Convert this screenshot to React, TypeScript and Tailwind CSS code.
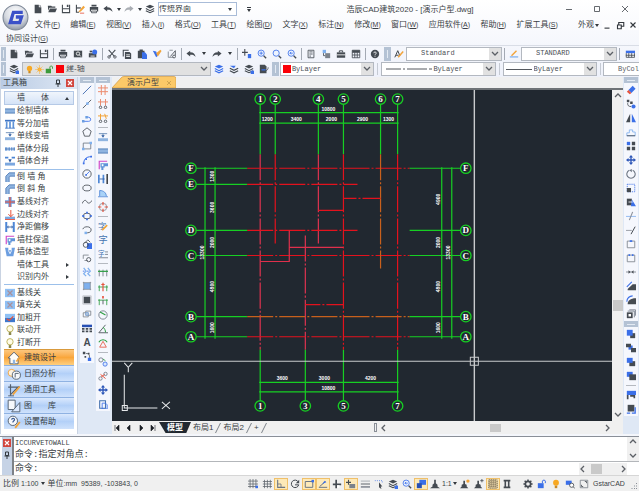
import { Fragment, type ReactNode } from "react";

// ------------------------------------------------------------
// | ICONS (12x12 grid)
// ------------------------------------------------------------
const K = "#454b52";
const B = "#3b6fe8";
const L = "#7fb0ee";
const R = "#e5533d";
const O = "#f2a43a";
const G = "#2f9e44";

const line = (d: string, color = K, w = 1) => <path d={d} stroke={color} strokeWidth={w} fill="none" />;
const fill = (d: string, color = K) => <path d={d} fill={color} />;

const layers = (
  <>
    {fill("M6 1l5 2-5 2.5L1 3z")}
    {line("M1 5.5l5 2.5 5-2.5M1 8l5 2.5L11 8", K, 1.3)}
  </>
);
const magnifier = (
  <>
    <circle cx="5" cy="5" r="3.7" stroke={B} fill="#eef4ff" />
    {line("M8 8l3 3", K, 1.6)}
  </>
);
const wallBar = fill("M0 3.5h12v5H0z", "#8fb4e0");

const icons: Record<string, ReactNode> = {
  file: fill("M2 1h5v3h3v7H2zM8 1l2 2H8z"),
  open: fill("M1 2h4l1 1h4v1.5H3L1.5 8zM3.5 5.5H12L10 10H1.5z"),
  save: (
    <>
      {line("M1.7 1v9.3h8.6V1", K, 1.3)}
      {fill("M2 5h8v1.3H2zM7 1h2v2.500H7z")}
    </>
  ),
  saveAs: (
    <>
      {line("M5 10H1.7V1", K, 1.3)}
      {fill("M2 4h5v1.5H2z")}
      {fill("M5 8l5-6 2 2-5 5-3 1z", O)}
      {line("M6 11h5", R)}
    </>
  ),
  print: (
    <>
      {fill("M3 1h6v2H3zM1 3.7h10V9H9.5V7h-7v2H1z")}
      {line("M3 8.5h6v2H3z")}
    </>
  ),
  preview: (
    <>
      {fill("M1 2h10v8H1z")}
      <circle cx="6" cy="5.5" r="2" stroke="#fff" fill={K} />
      {line("M7.5 7l2 2", "#fff")}
    </>
  ),
  publish: (
    <>
      {fill("M1 5h9v5H1z")}
      {line("M3 8.5h5", "#fff")}
      <circle cx="8" cy="3.5" r="3" fill={B} />
      {fill("M2 2h3v2H2z")}
    </>
  ),
  undo: fill("M5 2v2c4 0 6 2 6.5 5.5C10 7.500 8 6.800 5 7v2L0.500 5.500z"),
  redo: fill("M7 2v2C3 4 1 6 .5 9.500 2 7.500 4 6.800 7 7v2l4.500-3.500z"),
  redoGray: fill("M7 2v2C3 4 1 6 .5 9.500 2 7.500 4 6.800 7 7v2l4.500-3.500z", "#a9adb3"),
  layers,
  layersBlue: (
    <>
      {layers}
      {fill("M8 8h4v4H8z", B)}
    </>
  ),
  layersAll: (
    <>
      {fill("M6 1l5 2-5 2.5L1 3z", B)}
      {line("M1 5.500l5 2.500 5-2.500M1 8l5 2.500L11 8", B, 1.4)}
    </>
  ),
  layersUndo: (
    <>
      {fill("M1 2h7L6 5z", B)}
      {line("M1 5l5 2.500L11 5M1 8l5 2.500L11 8", K, 1.4)}
    </>
  ),
  layerFile: (
    <>
      {fill("M1 1h6l2 2v8H1z")}
      {line("M3 7h5", B, 1.5)}
      {line("M8 8c2 0 3-2 3-4")}
    </>
  ),
  cut: (
    <>
      {line("M2 1l7 8M10 1L3 9", K, 1.3)}
      <circle cx="2.500" cy="9.500" r="1.500" stroke={K} />
      <circle cx="9.500" cy="9.500" r="1.500" stroke={K} />
    </>
  ),
  copy: (
    <>
      {line("M1.500 9V1.500H8", K, 1.3)}
      {fill("M3.500 3.500H9l2 2V12H3.500z")}
      {line("M5 7h4.500M5 9h4.500", "#fff")}
    </>
  ),
  paste: (
    <>
      {fill("M1 2h8v9H1zM3 0.500h4v2H3z")}
      {fill("M6 4h3.500L12 6.500V12H6z", B)}
    </>
  ),
  brush: (
    <>
      {fill("M1 2l4 1 2 5-2 2z", B)}
      {fill("M5 5l5-4 1.500 1.500L7 9z", O)}
    </>
  ),
  block: (
    <>
      {line("M1.500 3v7h6M3 1.500h4", "#7c828a")}
      {line("M4 9l6-7M10 2v6", K)}
      <circle cx="8.500" cy="9" r="1.700" stroke={K} />
    </>
  ),
  pan: (
    <>
      {fill("M4 0v8H2.700V0zM0 3.300h7v1.400H0z")}
      {fill("M7 6h4v5H7z", B)}
    </>
  ),
  zoomIn: (
    <>
      {magnifier}
      {line("M3 5h4M5 3v4", B)}
    </>
  ),
  zoomWin: magnifier,
  zoomPrev: (
    <>
      {magnifier}
      {line("M7 5H3.500l1.500-1.500M3.500 5L5 6.500", B)}
    </>
  ),
  props: (
    <>
      {line("M2.500 1.500h7v9h-7z")}
      {line("M4 3.500h4M4 6h4M4 8.500h2")}
    </>
  ),
  clips: (
    <>
      {fill("M2 1h4v4H2z", L)}
      {fill("M5 5h6v6H5z", "#7c828a")}
      {line("M3 5v3h2")}
    </>
  ),
  toolCase: (
    <>
      {fill("M1 4h10v6.500H1z")}
      {line("M4 4V2.200h4V4", K, 1.2)}
      {line("M1 7h10", "#fff")}
    </>
  ),
  calc: (
    <>
      {line("M1.500 1.500h9v9h-9zM1.500 4h9M1.500 7.200h9M4.500 4v6.500M7.500 4v6.500")}
      {fill("M1.500 1.500h9V4h-9z")}
    </>
  ),
  help: (
    <>
      <circle cx="6" cy="6" r="5" fill={K} />
      {line("M4.500 5c0-2 3-2 3 0 0 1-1.500 1-1.500 2M6 8v1.300", "#fff")}
    </>
  ),
  textStyle: (
    <>
      {line("M1 10L4.500 2 7 8M2.500 7.500h3", K, 1.2)}
      {line("M5 10l6-7", O, 1.8)}
    </>
  ),
  dimStyle: (
    <>
      {line("M1 9.500h10", L, 1.5)}
      {line("M3 8l6-6", O, 1.8)}
    </>
  ),
  tableStyle: (
    <>
      {fill("M1 2h11v3H1z", B)}
      {line("M1.500 5v5h10V5M1 7.500h11M4.500 5v5M8 5v5")}
    </>
  ),
  bulb: (
    <>
      <circle cx="6" cy="4.500" r="3.500" fill="#f7a823" />
      {fill("M4.500 8h3v3h-3z", "#c98a25")}
    </>
  ),
  bulbOutline: (
    <>
      <circle cx="6" cy="4.500" r="3.800" fill="#fffbe6" stroke="#b3a94a" />
      {fill("M4.500 8.500h3V12h-3z", "#8b8748")}
    </>
  ),
  sun: (
    <>
      <circle cx="6" cy="6" r="2.700" fill="#f7a823" />
      {line("M6 0v12M0 6h12M2 2l8 8M10 2l-8 8", "#f7b94e", 0.8)}
    </>
  ),
  unlock: (
    <>
      {fill("M1 5h7v6H1z", "#3c9a3c")}
      {line("M6.500 5V2.500c0-1.500 3.500-1.500 3.500 0V5", "#3c9a3c", 1.2)}
    </>
  ),
  unlockBlue: (
    <>
      {fill("M1 5h7v6H1z", B)}
      {line("M6.500 5V2.500c0-1.500 3.500-1.500 3.500 0V5", B, 1.2)}
    </>
  ),

  // toolbox rows
  wall: (
    <>
      {wallBar}
      {line("M0 3.500h12M0 8.500h12", "#4674b0")}
    </>
  ),
  wallSplit: (
    <>
      {line("M0 2h12", "#3f74c4", 2)}
      {line("M2 3v8M6 3v8M10 3v8", "#5f93d8", 2)}
      {line("M0 11h12", "#3f74c4")}
    </>
  ),
  wallSingle: (
    <>
      {line("M1 2h10M6 2v3", "#5a7fae")}
      {fill("M4 4h4L6 7z", "#2c5aa0")}
      {fill("M0 7.500h12V11H0z", "#8fb4e0")}
    </>
  ),
  wallParts: (
    <>
      {fill("M0 4h3v4H0zM4 4h2v4H4zM7 4h2v4H7zM10 4h2v4h-2z", "#7ba7df")}
      {line("M0 6h12", "#4674b0")}
    </>
  ),
  wallMerge: (
    <>
      {line("M0 2h4M8 2h4", "#4d86d6", 2)}
      {fill("M4 4h4L6 8z", "#2c5aa0")}
      {fill("M0 8h12v3.500H0z", "#7ba7df")}
    </>
  ),
  corner: (
    <>
      {fill("M1 12V5l4-4h7v4H6L5 6v6z", "#8fb4e0")}
      {line("M1 12V5l4-4h7M5 12V6l1-1h6", "#4d78b4")}
    </>
  ),
  cross: (
    <>
      {line("M6 0v12M0 6h12", "#6f9fe0", 4)}
      {line("M6 0v12M0 6h12", R, 1.4)}
    </>
  ),
  sideAlign: (
    <>
      {fill("M0 8h12v3H0z", "#7ba7df")}
      {line("M7 0v8M4 5l3 3 3-3M0 11.500h12", R, 1.2)}
    </>
  ),
  offset: (
    <>
      {line("M1.500 0v12M10.500 0v12", "#4d86d6", 2.4)}
      {line("M3 6h6", "#2c5aa0")}
      {fill("M4 4v4L2.500 6zM8 4v4l1.500-2z", "#2c5aa0")}
    </>
  ),
  column: (
    <>
      {line("M1.500 11V1.500H11", "#d048c8", 1.4)}
      {fill("M3 4h9v3.500H8V9H6.500v3H4V9H3z", "#5f93d8")}
      {fill("M4.500 5h2v2.500h-2z", "#fff")}
    </>
  ),
  shape: (
    <>
      {fill("M0 1h4v3h4V1h4l-2 10H2z", "#6c9ee0")}
      {line("M4 4l2 4 2-4", "#fff")}
    </>
  ),
  offX: (
    <>
      {fill("M0 1h12v10H0z", "#8fc0f4")}
      {line("M3 3l6 6M9 3L3 9", "#a9909c", 1.5)}
    </>
  ),
  onCheck: (
    <>
      {fill("M0 1h12v5H0z", "#8fc0f4")}
      {fill("M0 6h12v5H0z", "#3f78cc")}
      {line("M2 7l3 2 5-5", R, 1.5)}
    </>
  ),

  // draw column
  line: line("M1 11L11 1", "#5379b8", 1.2),
  ray: (
    <>
      {line("M1 11L11 1")}
      {fill("M5 4h3v3H5z", L)}
    </>
  ),
  pline: (
    <>
      {line("M1 10h7c4 0 3-6-2-5", B)}
      {fill("M0 8.500h3v3H0zM4 3.500h3v3H4z", "#6c9ee0")}
    </>
  ),
  polygon: line("M6 1l5 4-2 6H3L1 5z"),
  rect: (
    <>
      {line("M1.500 2.500h9v7h-9z", "#6d7683")}
      {fill("M0 8h3v3H0zM9 1h3v3H9z", L)}
    </>
  ),
  arc: (
    <>
      {line("M2 11C2 5 5 2 11 2", B, 1.2)}
      {fill("M1 9h2v2H1zM4 4h2v2H4zM10 1h2v2h-2z", B)}
    </>
  ),
  circle: (
    <>
      <circle cx="6" cy="6" r="5" stroke={K} fill="none" />
      {line("M4.500 7.500L9 3", B)}
      {fill("M4 6h2v2H4z", B)}
    </>
  ),
  ellipse: <ellipse cx="6" cy="6" rx="5" ry="3.500" stroke={K} fill="none" />,
  spline: line("M0 8c3-6 5-4 6-2s4 2 6-2"),
  ellipseDots: (
    <>
      <ellipse cx="6" cy="6" rx="4.500" ry="3.500" stroke={K} fill="none" />
      {fill("M0 5h3v2H0zM9 5h3v2H9zM5 1h2v2H5zM5 9h2v2H5z", B)}
    </>
  ),
  ellipseArc: (
    <>
      {line("M1 5c1-4 10-4 10 1 0 3-4 4-7 3")}
      {fill("M3 8h3v3H3z", L)}
    </>
  ),
  insertBlock: (
    <>
      {fill("M6 5h6v7H6z", B)}
      <circle cx="4.500" cy="7" r="3" stroke={K} fill="none" />
      {line("M3 5l4-4 3 3")}
    </>
  ),
  makeBlock: (
    <>
      {line("M1.500 7V2.500H8M3 9h4", "#7c828a")}
      <circle cx="8" cy="8" r="2.500" stroke={K} fill="none" />
    </>
  ),
  divide: (
    <>
      {line("M2 1l3 4-3 3 3 3M7 1l3 4-3 3 3 3", L, 1.5)}
      {line("M1 5h2M6 5h2", B)}
    </>
  ),
  hatch: (
    <>
      {fill("M2 2h8v8H2z", L)}
      {line("M1 2h10M1 10h10M2 1v10M10 1v10", "#7c828a", 0.8)}
    </>
  ),
  gradient: (
    <>
      {fill("M2 2h8v8H2z", K)}
      {line("M1 1h10v10H1z", "#b0b4ba", 0.8)}
    </>
  ),
  region: (
    <>
      {line("M1.500 4.500h6v5h-6zM4.500 2.500h6v5h-6z", "#7c828a")}
      {line("M4.500 4.500h3v3h-3z", L)}
    </>
  ),
  table: (
    <>
      {fill("M0 2h12v3H0z", "#274fb4")}
      {fill("M0 6h3v2H0zM4.500 6h3v2h-3zM9 6h3v2H9zM0 9h3v2H0zM4.500 9h3v2h-3zM9 9h3v2H9z")}
    </>
  ),
  letterA: (
    <text x="6" y="10.500" fontSize="12" fontWeight="bold" textAnchor="middle" fill={K}>
      A
    </text>
  ),
  points: (
    <>
      {fill("M1 1h3v3H1zM7 2h2v2H7zM3 6h2v2H3z")}
      {fill("M7 8h4v4H7z", B)}
      {line("M5 3c4 0 4 2 4 5")}
    </>
  ),

  // wall column
  grid: line("M4 0v12M8.500 0v12M0 3.500h12M0 8h12", "#ec8d70", 1.2),
  axisA: (
    <>
      {line("M3 0v8M9 0v8M0 3.500h12", "#ec8d70", 1.2)}
      <circle cx="3" cy="10" r="1.500" stroke={K} fill="none" />
      <circle cx="9" cy="10" r="1.500" stroke={K} fill="none" />
    </>
  ),
  axisB: (
    <>
      {line("M3 1v7M8 1l2 6M0 3.500h12", O, 1.2)}
      <circle cx="3" cy="10" r="1.500" stroke={K} fill="none" />
      <circle cx="9" cy="10" r="1.500" stroke={K} fill="none" />
    </>
  ),
  opening: (
    <>
      {line("M1 1v10M6.500 1v10", "#4d86d6", 2)}
      {line("M2 6h6", "#2c5aa0")}
      {line("M11 0v12", "#1c2026", 1.6)}
    </>
  ),
  door: (
    <>
      {fill("M2 10V3c5 0 8 3 8 7z", "#a9d2f7")}
      {line("M2 10V3c5 0 8 3 8 7M0 10.500h12", "#4d86d6")}
    </>
  ),
  roundCross: (
    <>
      <circle cx="6" cy="6" r="4.500" stroke="#8a8f98" fill="none" />
      {line("M6 0v4M6 8v4M0 6h4M8 6h4", R, 1.4)}
    </>
  ),
  textEdit: (
    <>
      <text x="5" y="9" fontSize="10" textAnchor="middle" fill="#4674b0">
        字
      </text>
      {line("M5 11l6-6", O, 2)}
    </>
  ),
  textOne: (
    <text x="6" y="10" fontSize="11" textAnchor="middle" fill="#4674b0">
      字
    </text>
  ),
  textMulti: (
    <>
      <text x="4" y="8" fontSize="8" textAnchor="middle" fill="#4674b0">
        字
      </text>
      {line("M8.500 3.500H12M8.500 6.500H12M1 10.500h11", "#6d7683")}
    </>
  ),
  dimGreen: (
    <>
      {line("M1.500 2v8M6 2v8M10.500 2v8", "#6d7683")}
      {line("M0 4h12", G, 1.5)}
    </>
  ),
  dimRed: (
    <>
      {line("M1.500 4v7M10.500 4v7M0 6h12", G)}
      {line("M6 1v10M4 3h4", R, 1.4)}
    </>
  ),
  dimTri: (
    <>
      {line("M1.500 4v7M10.500 4v7M0 5h12", G)}
      {fill("M5 0h2v3H5z", R)}
      {line("M6 5v5")}
    </>
  ),
  radius: (
    <>
      <circle cx="6" cy="6" r="5" stroke="#6d7683" fill="none" />
      {line("M2.500 2.500L9 6", G, 1.4)}
    </>
  ),
  angle: (
    <>
      {line("M1 10.500h11M1 10.500L9 1")}
      {line("M6 4c2 1 3 4 3 6", G, 1.2)}
    </>
  ),
  coord: (
    <>
      {line("M1 5c2-4 8-4 10 0", G, 1.3)}
      {line("M2 11l4-7 4 7z", R)}
    </>
  ),
  copyRound: (
    <>
      <circle cx="3.500" cy="3.500" r="2.500" stroke="#6d7683" fill="none" />
      <circle cx="8.500" cy="8.500" r="2.500" stroke={B} fill="#dbe8fd" />
      {line("M6 2.500l3 2", G)}
    </>
  ),
  rotateLink: (
    <>
      <circle cx="3" cy="9" r="2" stroke="#6d7683" fill="none" />
      <circle cx="9" cy="3.500" r="2" stroke="#6d7683" fill="none" />
      {line("M3 4l6 5M4 7l4-3", R, 1.2)}
    </>
  ),
  move: (
    <>
      {line("M6 2v8M2 6h8", "#2c56b8", 1.6)}
      {fill("M6 0l2.500 3h-5zM6 12l2.500-3h-5zM0 6l3-2.500v5zM12 6L9 3.500v5z", "#2c56b8")}
    </>
  ),
  pasteDoc: (
    <>
      {line("M2 2h7v9H2z", "#4674b0", 1.3)}
      {line("M5 5h4l2 2v5H5z", B)}
    </>
  ),

  // modify column
  erase: (
    <>
      {fill("M3 6l5-5 3.500 3.500-5 5z", B)}
      {fill("M3 6l3.500 3.500L4.500 11 1 8z", R)}
    </>
  ),
  copyObj: (
    <>
      {fill("M1 1h3v3H1zM5 3h3v3H5z")}
      <circle cx="9" cy="9" r="2.500" fill={B} />
      {line("M2 5c0 3 1 4 4 4")}
    </>
  ),
  mirror: (
    <>
      {fill("M5 1v10H0z")}
      {fill("M7 1v10h5z", B)}
    </>
  ),
  offsetObj: (
    <>
      {line("M1 10.500h10V6H8V3.500H4V7H1z", L)}
      {line("M1 10.500h10", K)}
    </>
  ),
  array: (
    <>
      {fill("M1 1h4v4H1z", B)}
      {fill("M7 1h4v4H7zM1 7h4v4H1zM7 7h4v4H7z")}
    </>
  ),
  rotate: (
    <>
      {line("M4 1.500A5 5 0 1 0 8 1.500", "#6d7683", 1.3)}
      {fill("M7 0v4L4 1.500z", "#6d7683")}
    </>
  ),
  scale: (
    <>
      <path d="M1.500 1.500h9v9h-9z" fill="none" stroke={B} strokeDasharray="1.500 1" />
      {fill("M1 6h5v5H1z")}
    </>
  ),
  stretch: (
    <>
      {fill("M1 2h6v8H1z")}
      {fill("M7 3l5 8H6z", B)}
      {line("M3 6h5", "#fff")}
    </>
  ),
  trim: (
    <>
      {line("M0 6.500h12", L)}
      {line("M4 11L8 1", "#8a8f98", 1.3)}
    </>
  ),
  extend: (
    <>
      {line("M0 6.500h7", "#8a8f98")}
      {line("M6 11l5-9", K, 1.2)}
    </>
  ),
  breakPt: (
    <>
      {line("M1.500 2.500h9v8h-9z", "#7c828a")}
      {line("M4.500 2.500h3", B, 2)}
    </>
  ),
  breakTwo: (
    <>
      {line("M1.500 2.500h9v8h-9z", "#7c828a")}
      {line("M3 2.500h2M7 2.500h2", B, 2)}
    </>
  ),
  join: (
    <>
      {line("M0 6h12", "#7c828a")}
      {fill("M3 4l2.500 2L3 8zM9 4L6.500 6 9 8z")}
    </>
  ),
  chamfer: (
    <>
      {fill("M2 11V9.500L8 4h4v7z")}
      {line("M1 7l6-6", B, 1.3)}
    </>
  ),
  fillet: (
    <>
      {fill("M2 11c0-4 3-7 10-7v7z")}
      {line("M1 8c0-4 3-7 7-7", B, 1.3)}
    </>
  ),
  explode: (
    <>
      {fill("M1 4h7v7H1z")}
      {line("M2 2.500h8V10M4 1h7.500v7", "#6d7683")}
      {fill("M3 6h3v3H3z", "#fff")}
    </>
  ),
  orderFront: (
    <>
      {fill("M5 5h6v6H5z")}
      {fill("M1 1h7v7H1z", B)}
    </>
  ),
  orderBack: (
    <>
      {fill("M3 3h5v5H3z", B)}
      {fill("M0 1h6v4H0zM6 6h6v5H6z")}
    </>
  ),
  orderAbove: (
    <>
      {fill("M4 5h7v6H4z")}
      {fill("M1 1h7v6H1z", B)}
    </>
  ),
  orderUnder: (
    <>
      {fill("M1 1h7v6H1z", B)}
      {fill("M4 4h8v7H4z")}
    </>
  ),
  textFront: (
    <>
      {fill("M1 1h11v5H1z", B)}
      {fill("M1 6h2v5H1zM5 6h4v2H5zM9 6h2v4H9z")}
    </>
  ),
  hatchBack: (
    <>
      {fill("M2 1h8v8H2z")}
      {line("M1 11h4M7 11h4V4", B, 1.6)}
    </>
  ),

  // status bar
  snap: (
    <>
      {line("M2.500 0v11M6 0v11M9.500 0v11M0 2.500h12M0 6h12M0 9h12", "#5c636c", 0.9)}
      {fill("M9 8h3v3H9z", B)}
    </>
  ),
  gridMode: line("M3 1v10M6.500 1v10M10 1v10M1 3h11M1 6h11M1 9h11", "#5c636c", 0.9),
  ortho: (
    <>
      {line("M2 1v9h9", "#6d7683", 1.3)}
      {line("M2 6h4v4", "#6d7683")}
    </>
  ),
  polar: (
    <>
      {line("M10 3.500A4.500 4.500 0 1 0 10.500 7H6", K, 1.2)}
      {fill("M11 1v4H7z")}
    </>
  ),
  osnap: (
    <>
      {line("M1.500 3h9v7h-9z", "#6d7683", 1.2)}
      {fill("M9 1h3v3H9z", B)}
    </>
  ),
  otrack: (
    <>
      {line("M1 10h10M2 9l7-6", "#6d7683", 1.2)}
      {fill("M5 6l3-4 2 2z", B)}
    </>
  ),
  ucs: (
    <>
      {line("M5 1v10M1 6.500h10", K, 2)}
      {fill("M6 7.500h3v3H6z", "#fff")}
    </>
  ),
  dyn: (
    <>
      {line("M3 1v6M0 4h6", K, 1.3)}
      {fill("M4 6h7v5H4z", "#7c828a")}
    </>
  ),
  weight: (
    <>
      {line("M1 2.500h11", "#8a8f98", 0.8)}
      {line("M1 6h11", K)}
      {line("M1 9.500h11", "#8a8f98", 2)}
    </>
  ),
  pick: (
    <>
      <path d="M1 2h9v3" fill="none" stroke={B} strokeDasharray="1 1.500" />
      {fill("M6 4l4 5H8l1 3-1.500-1L6 10z")}
    </>
  ),
  model: (
    <>
      {fill("M4 1h8v6H4z", B)}
      {fill("M1 5h6v6H1z", "#274fb4")}
    </>
  ),
  anno: fill("M5 1h2v4l2 2v2l3 2H0l3-2V7l2-2z"),
  annoSun: (
    <>
      {fill("M4 2h2v4l2 1v2l2 2H0l2-2V7l2-1z")}
      <circle cx="9.500" cy="2.500" r="2" fill={O} />
    </>
  ),
  annoPlus: (
    <>
      {fill("M4 2h2v4l2 1v2l2 2H0l2-2V7l2-1z")}
      {line("M9.500 0v4M7.500 2h4")}
    </>
  ),
  checker: (
    <path
      d="M1 1h10v10H1zM3.500 1v10M6 1v10M8.500 1v10M1 3.500h10M1 6h10M1 8.500h10"
      stroke="#5e5240"
      strokeWidth="1"
      strokeDasharray="1.500 0.800"
      fill="none"
    />
  ),
  column2: (
    <>
      {fill("M2 1h8v2H2zM2 9h8v2H2zM3 3h6v6H3z")}
      {line("M6 3v6", "#fff", 2)}
    </>
  ),
  gear: (
    <>
      <circle cx="6" cy="6" r="3.200" stroke={K} strokeWidth="2" fill="none" />
      {line("M6 0.500v2M6 9.500v2M0.500 6h2M9.500 6h2M2 2l1.500 1.500M8.500 8.500L10 10M10 2L8.500 3.500M3.500 8.500L2 10", K, 1.8)}
    </>
  ),
  inspect: (
    <>
      {fill("M1 2h7v5H1z", B)}
      <circle cx="8" cy="7.500" r="2.500" stroke={K} fill="#fff" />
      {line("M10 9.500l2 2")}
    </>
  ),
  fullscreen: (
    <>
      {line("M1.500 1.500h9v9h-9z", "#7c828a")}
      {line("M7 3h2v2M5 9H3V7")}
    </>
  ),

  // category buttons
  house: (
    <>
      <path d="M1 6l5-5 5 5H9.500v5h-7V6z" fill="#fffdf7" stroke="#53606f" strokeWidth="0.8" />
      {fill("M5 7.500h2V11H5z", "#8fb4e0")}
      {line("M8 9l3-4", O, 1.3)}
    </>
  ),
  sunHouse: (
    <>
      <circle cx="4" cy="5" r="3" fill="#fdf3e2" stroke={O} strokeWidth="0.8" />
      <circle cx="8" cy="7" r="3.500" fill="#f6f8fb" stroke="#53606f" strokeWidth="0.8" />
      {line("M7 9V5.500h3", "#53606f", 0.8)}
    </>
  ),
  tools: (
    <>
      {line("M1 3.500h10M3 1v10M3 10l7-7", "#53606f", 1)}
      {line("M5 10l6-7", O, 1.5)}
      {line("M1 11h5", "#53606f", 0.8)}
    </>
  ),
  library: (
    <>
      <path d="M1 1h6v8H1z" fill="#f6f8fb" stroke="#53606f" strokeWidth="0.8" />
      <path d="M4 11l7-8v8z" fill="#dbe8fd" stroke="#53606f" strokeWidth="0.8" />
    </>
  ),
  helpTool: (
    <>
      <circle cx="5" cy="5" r="4" fill="#f6f8fb" stroke="#53606f" strokeWidth="0.8" />
      {line("M4 4c0-1.500 2.500-1.500 2.500 0C6.500 5 5 5 5 6.500", "#3b5b94", 1)}
      {line("M7 11l4-5", O, 1.6)}
    </>
  ),
};

function Icon({ name, className = "size-3" }: { name: string; className?: string }) {
  return (
    <svg viewBox="0 0 12 12" fill="none" className={`shrink-0 ${className}`} aria-hidden="true">
      {icons[name]}
    </svg>
  );
}

function Caret() {
  return (
    <svg viewBox="0 0 4 3" className="h-[3px] w-1 shrink-0" aria-hidden="true">
      <path d="M0 0h4L2 3z" fill="#33383e" />
    </svg>
  );
}

function Chevron({ d = "M1 2l3 3 3-3" }: { d?: string }) {
  return (
    <svg viewBox="0 0 8 8" className="size-2 shrink-0" aria-hidden="true">
      <path d={d} stroke="#5c6066" strokeWidth="1.3" fill="none" />
    </svg>
  );
}

// ------------------------------------------------------------
// | TOOLBAR PARTS
// ------------------------------------------------------------
function Tool({ name, wide = "w-[15px]" }: { name: string; wide?: string }) {
  return (
    <button type="button" aria-label={name} className={`flex shrink-0 items-center justify-center ${wide}`}>
      <Icon name={name} className="size-[10px]" />
    </button>
  );
}

function Tools({ names }: { names: string[] }) {
  return (
    <>
      {names.map((name) => (
        <Tool key={name} name={name} />
      ))}
    </>
  );
}

const Divider = () => <span className="mr-px ml-0.5 h-3 w-px shrink-0 bg-[#a3a9b3]" />;

const Grip = ({ wide = "w-[5px]" }: { wide?: string }) => (
  <span className={`flex h-[14px] shrink-0 items-center justify-center bg-[#b4c2d4] ${wide}`}>
    <span className="h-2 w-px bg-[#e3eaf3]" />
  </span>
);

interface ComboProps {
  label: string;
  value: string;
  className?: string;
  textClass?: string;
  children?: ReactNode;
}

function Combo({ label, value, className = "", textClass = "", children }: ComboProps) {
  return (
    <div className={`flex h-[14px] min-w-0 items-center border border-[#b3b8c0] ${className}`}>
      {children}
      <select
        aria-label={label}
        className={`h-3 min-w-0 flex-1 appearance-none bg-transparent leading-none text-[#4a4f56] outline-none ${textClass}`}
      >
        <option>{value}</option>
      </select>
      <span className="flex h-3 w-3 shrink-0 items-center justify-center bg-[#e1e1e1]">
        <Chevron />
      </span>
    </div>
  );
}

const mono = "font-['Liberation_Mono','Noto_Sans_CJK_SC',monospace] text-[7px]";

// ------------------------------------------------------------
// | HEADER
// ------------------------------------------------------------
const menus = [
  ["文件", "F"],
  ["编辑", "E"],
  ["视图", "V"],
  ["插入", "I"],
  ["格式", "O"],
  ["工具", "T"],
  ["绘图", "D"],
  ["文字", "X"],
  ["标注", "N"],
  ["修改", "M"],
  ["窗口", "W"],
  ["应用软件", "A"],
  ["帮助", "H"],
  ["扩展工具", "S"],
];

function MenuItem({ label, hotkey }: { label: string; hotkey: string }) {
  return (
    <button type="button" className="shrink-0 whitespace-nowrap">
      {label}
      <span className="text-[7px]">
        (<u>{hotkey}</u>)
      </span>
    </button>
  );
}

function Logo() {
  return (
    <svg viewBox="0 0 26 26" className="size-[27px]" aria-label="GstarCAD">
      <defs>
        <radialGradient id="logo" cx="50%" cy="30%" r="70%">
          <stop offset="0" stopColor="#ffffff" />
          <stop offset="0.6" stopColor="#d5d9e0" />
          <stop offset="1" stopColor="#8e97a5" />
        </radialGradient>
      </defs>
      <circle cx="13" cy="13" r="12" fill="url(#logo)" stroke="#7d8796" />
      <path d="M20 8h-9L8 18h9l1.800-5.500h-5.500" fill="none" stroke="#3a50c8" strokeWidth="3.200" />
    </svg>
  );
}

function Header() {
  return (
    <header className="shrink-0 bg-linear-to-b from-white to-[#eef1fa]">
      <div className="flex">
        <div className="flex w-[31px] shrink-0 items-center justify-center pt-0.5">
          <Logo />
        </div>
        <div className="min-w-0 flex-1">
          <div className="flex h-[18px] items-center">
            {["file", "open", "save", "saveAs", "print", "undo"].map((name) => (
              <Tool key={name} name={name} wide="w-[14px]" />
            ))}
            <span className="flex w-[7px] justify-center">
              <Caret />
            </span>
            <Tool name="redoGray" wide="w-[14px]" />
            <span className="flex w-[7px] justify-center">
              <Caret />
            </span>
            <Tool name="layers" wide="w-[14px]" />
            <div className="ml-px flex h-[14px] w-[79px] shrink-0 items-center border border-[#a9bcd8] bg-white pr-1">
              <select aria-label="界面" className="h-3 min-w-0 flex-1 appearance-none leading-none outline-none">
                <option>传统界面</option>
              </select>
              <Caret />
            </div>
            <button type="button" aria-label="自定义" className="flex w-6 shrink-0 flex-col items-center gap-px">
              <span className="h-px w-1 bg-[#33383e]" />
              <Caret />
            </button>
            <h1 className="flex-1 truncate pt-0.5 pl-1 text-center leading-4">浩辰CAD建筑2020 - [演示户型.dwg]</h1>
            {[
              ["最小化", "M1 4.500h6"],
              ["最大化", "M1.500 1.500h5v5h-5z"],
              ["关闭", "M1 1l6 6M7 1L1 7"],
            ].map(([label, d]) => (
              <button key={label} type="button" aria-label={label} className="flex w-7 shrink-0 justify-center">
                <svg viewBox="0 0 8 8" className="size-2">
                  <path d={d} stroke="#55595f" strokeWidth="0.9" fill="none" />
                </svg>
              </button>
            ))}
          </div>
          <nav className="flex h-[14px] items-center gap-5 pl-1">
            <div className="flex min-w-0 flex-1 justify-between">
              {menus.map(([label, hotkey]) => (
                <MenuItem key={label} label={label} hotkey={hotkey} />
              ))}
            </div>
            <div className="flex shrink-0 items-center gap-[3px] pr-px">
              <button type="button" className="flex items-center gap-px">
                外观
                <Caret />
              </button>
              {[
                ["最小化窗口", "M2 6.500h4"],
                ["还原窗口", "M3 4V2h4v3H5M2 4h3v3H2z"],
                ["关闭窗口", "M2 2l4 4M6 2L2 6"],
              ].map(([label, d]) => (
                <button key={label} type="button" aria-label={label} className="size-[10px] bg-[#fdfdfe]">
                  <svg viewBox="0 0 8 8" className="size-[10px]">
                    <path d={d} stroke="#33383e" strokeWidth="0.9" fill="none" />
                  </svg>
                </button>
              ))}
            </div>
          </nav>
        </div>
      </div>
      <div className="flex h-[13px] items-center pl-1.5">
        <MenuItem label="协同设计" hotkey="G" />
      </div>

      {/* Standard toolbar */}
      <div className="flex h-4 items-center border-t border-[#d9dde6] pl-px">
        <Grip />
        <Tools names={["file", "open", "save"]} />
        <Divider />
        <Tools names={["print", "preview", "publish"]} />
        <Divider />
        <Tools names={["cut", "copy", "paste", "brush", "block"]} />
        <Divider />
        <Tool name="undo" />
        <span className="flex w-[11px] justify-center">
          <Caret />
        </span>
        <Tool name="redo" />
        <span className="flex w-[11px] justify-center">
          <Caret />
        </span>
        <Divider />
        <Tools names={["pan", "zoomIn", "zoomWin", "zoomPrev"]} />
        <Divider />
        <Tools names={["props", "clips", "toolCase", "calc"]} />
        <Divider />
        <Tool name="help" />
        <span className="w-0.5 shrink-0" />
        <Grip wide="w-[7px]" />
        <Tool name="textStyle" />
        <Combo label="文字样式" value="Standard" className="flex-1 bg-white" textClass={`pl-[14px] ${mono}`} />
        <Divider />
        <Tool name="dimStyle" />
        <Combo label="标注样式" value="STANDARD" className="flex-1 bg-white" textClass={`pl-[14px] ${mono}`} />
        <Divider />
        <Tool name="tableStyle" wide="w-[18px]" />
      </div>

      {/* Layer and property toolbar */}
      <div className="flex h-4 items-center overflow-hidden pl-px">
        <Grip />
        <Tool name="layersBlue" />
        <Combo label="图层" value="建-轴" className="ml-px flex-[190] bg-[#e1e1e1]" textClass="pl-0.5">
          <span className="flex items-center gap-px pl-0.5">
            <Icon name="bulb" className="size-[9px]" />
            <Icon name="sun" className="size-[9px]" />
            <Icon name="unlock" className="size-[9px]" />
            <span className="ml-px size-2 bg-[#fb0007]" />
          </span>
        </Combo>
        <span className="w-px shrink-0" />
        <Tools names={["layersAll", "layersUndo", "layersBlue", "layerFile"]} />
        <Grip wide="w-[7px]" />
        <Combo label="颜色" value="ByLayer" className="ml-px flex-[94] bg-white" textClass={`pl-px ${mono}`}>
          <span className="ml-0.5 size-2 bg-[#fb0007]" />
        </Combo>
        <span className="mx-[3px] h-3 w-px shrink-0 bg-[#c5cad3]" />
        <Combo label="线型" value="ByLayer" className="flex-[114] bg-white" textClass={`pl-px ${mono}`}>
          <svg viewBox="0 0 46 2" className="ml-1 h-0.5 w-[46px] shrink-0">
            <path d="M0 1h15m2 0h2m2 0h20m2 0h3" stroke="#55595f" />
          </svg>
        </Combo>
        <span className="mx-[3px] h-3 w-px shrink-0 bg-[#c5cad3]" />
        <Combo label="线宽" value="ByLayer" className="flex-[94] bg-white" textClass={`pl-0.5 ${mono}`}>
          <span className="ml-0.5 h-px w-[26px] shrink-0 bg-[#55595f]" />
        </Combo>
        <span className="mr-0.5 ml-[3px] h-3 w-px shrink-0 bg-[#c5cad3]" />
        <div className="h-[14px] w-9 shrink-0 overflow-hidden border border-r-0 border-[#b3b8c0] bg-white">
          <select
            aria-label="打印样式"
            className={`h-3 w-16 appearance-none pl-[14px] leading-none text-[#5c6066] outline-none ${mono}`}
          >
            <option>ByColor</option>
          </select>
        </div>
      </div>
    </header>
  );
}

// ------------------------------------------------------------
// | TOOLBOX
// ------------------------------------------------------------
const toolboxGroups: [string, string][][] = [
  [
    ["wall", "绘制墙体"],
    ["wallSplit", "等分加墙"],
    ["wallSingle", "单线变墙"],
    ["wallParts", "墙体分段"],
    ["wallMerge", "墙体合并"],
  ],
  [
    ["corner", "倒 墙 角"],
    ["corner", "倒 斜 角"],
    ["cross", "基线对齐"],
    ["sideAlign", "边线对齐"],
    ["offset", "净距偏移"],
    ["column", "墙柱保温"],
    ["shape", "墙体造型"],
    ["", "墙体工具"],
    ["", "识别内外"],
  ],
  [
    ["offX", "基线关"],
    ["offX", "填充关"],
    ["onCheck", "加粗开"],
    ["bulbOutline", "联动开"],
    ["bulbOutline", "打断开"],
  ],
];

const categories = [
  ["house", "建筑设计"],
  ["sunHouse", "日照分析"],
  ["tools", "通用工具"],
  ["library", "图　　库"],
  ["helpTool", "设置帮助"],
];

const CloseRed = () => (
  <button type="button" aria-label="关闭" className="flex size-2 shrink-0 items-center justify-center bg-[#d2473f]">
    <svg viewBox="0 0 6 6" className="size-1.5">
      <path d="M1 1l4 4M5 1L1 5" stroke="#fff" strokeWidth="1.2" />
    </svg>
  </button>
);

const Pin = () => (
  <svg viewBox="0 0 6 8" className="h-2 w-1.5" aria-hidden="true">
    <path d="M1.500 1h3v3.500h-3zM0.500 5h5M3 5v3" stroke="#33383e" fill="none" />
  </svg>
);

function Toolbox() {
  return (
    <aside className="flex w-[78px] shrink-0 flex-col border-x border-[#c9d3e2] bg-white">
      <div className="flex h-3 items-center gap-[5px] bg-linear-to-r from-[#b9cbe4] to-[#dfe8f4] pr-[3px] pl-0.5">
        <h2 className="flex-1">工具箱</h2>
        <Pin />
        <CloseRed />
      </div>
      <div className="flex min-h-0 flex-1 flex-col px-[3px] pt-0.5 pb-[5px]">
        <button
          type="button"
          className="flex h-[14px] shrink-0 items-center border border-[#b5c9e6] bg-linear-to-b from-[#f0f5fc] to-[#d5e3f7] pr-1 pl-3"
        >
          <span className="flex-1 text-left">墙　　体</span>
          <svg viewBox="0 0 4 3" className="h-[3px] w-1">
            <path d="M0 3h4L2 0z" fill="#33383e" />
          </svg>
        </button>
        {toolboxGroups.map((group, idx) => (
          <Fragment key={idx}>
            {idx > 0 && <hr className="my-px border-[#9cc0ea]" />}
            {group.map(([icon, label]) => (
              <button
                key={label}
                type="button"
                className="flex min-h-0 flex-1 items-center gap-0.5 px-px text-left leading-none"
              >
                <Icon name={icon} className="size-[10px]" />
                <span className="flex-1 whitespace-nowrap">{label}</span>
                {!icon && (
                  <svg viewBox="0 0 3 4" className="mr-1 h-1 w-[3px]">
                    <path d="M0 0v4l3-2z" fill="#33383e" />
                  </svg>
                )}
              </button>
            ))}
          </Fragment>
        ))}
        <div className="shrink-0">
          {categories.map(([icon, label], idx) => (
            <button
              key={label}
              type="button"
              className={`flex h-4 w-full items-center gap-[3px] border-t px-[3px] ${
                idx === 0
                  ? "border-[#d99a3c] bg-linear-to-b from-[#fcc77d] via-[#f9a63a] to-[#fdcf7e]"
                  : "border-[#8fb2e2] bg-linear-to-b from-[#dbe9fd] via-[#b3d0f8] to-[#cfe2fc]"
              }`}
            >
              <Icon name={icon} className="size-[14px]" />
              {label}
            </button>
          ))}
        </div>
      </div>
    </aside>
  );
}

// ------------------------------------------------------------
// | VERTICAL TOOLBARS
// ------------------------------------------------------------
const drawTools =
  "line ray pline polygon rect arc circle ellipse spline ellipseDots ellipseArc insertBlock makeBlock divide hatch gradient region table letterA points";
const wallTools =
  "grid axisA axisB | wallSingle wall column opening door roundCross | textEdit textOne textMulti | dimGreen dimRed dimTri radius angle coord | copyRound rotateLink move pasteDoc";
const modifyTools =
  "erase copyObj mirror offsetObj array move rotate scale stretch trim extend breakPt breakTwo join chamfer fillet explode";
const orderTools = "orderFront orderBack orderAbove orderUnder | textFront hatchBack";

function ToolColumn({ names }: { names: string }) {
  return (
    <div className="flex w-[14px] flex-col bg-[#f5f7fd]">
      <span className="flex h-[6px] items-center justify-center bg-[#b4c2d4]">
        <span className="h-px w-2 bg-[#e3eaf3]" />
      </span>
      {names.split(" ").map((name, idx) =>
        name === "|" ? (
          <span key={idx} className="mx-0.5 my-0.5 h-px bg-[#b5b9c0]" />
        ) : (
          <button key={idx} type="button" aria-label={name} className="flex h-[14px] items-center justify-center">
            <Icon name={name} className="size-[10px]" />
          </button>
        ),
      )}
    </div>
  );
}

// ------------------------------------------------------------
// | DRAWING
// ------------------------------------------------------------
const GREEN = "#17cf23";
const RED = "#e3121d";

// axis grid: [label, position]
const topAxes: [string, number][] = [["1", 148], ["2", 163], ["4", 206], ["5", 231], ["6", 268], ["7", 285]];
const bottomAxes: [string, number][] = [["1", 148], ["3", 193], ["5", 231], ["7", 285]];
const leftAxes: [string, number][] = [["F", 78], ["E", 94], ["D", 140], ["C", 165], ["B", 226], ["A", 246]];
const rightAxes = leftAxes.filter(([name]) => name !== "E");

const topDims: [string, number][] = [["1200", 155], ["3400", 184], ["2000", 219], ["2900", 250], ["1300", 276]];
const bottomDims: [string, number][] = [["3600", 170], ["3000", 212], ["4200", 258]];
const leftDims: [string, number][] = [["1300", 86], ["3600", 117], ["2000", 152], ["4800", 196], ["1600", 237]];
const rightDims: [string, number][] = [["4900", 109], ["2000", 152], ["4800", 196], ["1600", 237]];

function Bubble({ x, y, label }: { x: number; y: number; label: string }) {
  return (
    <g>
      <circle cx={x} cy={y} r="5.200" fill="#212830" stroke={GREEN} strokeWidth="1.3" />
      <text
        x={x}
        y={y + 3}
        fontSize="9"
        fontWeight="bold"
        textAnchor="middle"
        fill="#fff"
        className="font-['Liberation_Serif',serif]"
      >
        {label}
      </text>
    </g>
  );
}

function Dim({ x, y, label, vertical = false }: { x: number; y: number; label: string; vertical?: boolean }) {
  return (
    <text
      x={x}
      y={y}
      fontSize="5"
      fontWeight="bold"
      textAnchor="middle"
      fill="#fff"
      transform={vertical ? `rotate(-90 ${x} ${y})` : undefined}
    >
      {label}
    </text>
  );
}

function Drawing() {
  return (
    <svg
      viewBox="0 0 499 330"
      preserveAspectRatio="xMidYMid slice"
      className="absolute inset-0 size-full font-['Liberation_Sans',sans-serif]"
      role="img"
      aria-label="演示户型"
    >
      {/* red axes and walls */}
      <g stroke={RED} strokeWidth="1.2" fill="none" strokeDasharray="26 2 2 2">
        <path d="M148 64v195M206 64v89M193 145v114" stroke="#dd3350" />
        <path d="M163 64v89M231 64v195M285 64v195" />
        <path d="M135 78h162M135 94h110M135 140h110M135 165h162M135 246h162" />
        <path d="M268 64v114M135 226h162" stroke="#c8601c" />
      </g>
      <g stroke={RED} strokeWidth="1.2" fill="none">
        <path d="M206 120h25M231 108h13m2 0h2m2 0h18M193 214h15m2 0h2m2 0h17" />
        <path d="M177 140v31h-29M177 157h54" stroke="#e0304c" />
      </g>

      {/* green extension and dimension lines */}
      <g stroke={GREEN} strokeWidth="1.2" fill="none">
        {topAxes.map(([name, x]) => (
          <path key={name} d={`M${x} 14v50`} />
        ))}
        {bottomAxes.map(([name, x]) => (
          <path key={name} d={`M${x} 259v51`} />
        ))}
        {leftAxes.map(([name, y]) => (
          <path key={name} d={`M84 ${y}h51`} />
        ))}
        {rightAxes.map(([name, y]) => (
          <path key={name} d={`M297 ${y}h51`} />
        ))}
        <path d="M147 22.500h139M147 33h139M147 291.500h139M147 301h139" />
        <path d="M93 77v171M103 77v171M329 77v171M339 77v171" />
      </g>

      {topAxes.map(([name, x]) => (
        <Bubble key={name} x={x} y={9} label={name} />
      ))}
      {bottomAxes.map(([name, x]) => (
        <Bubble key={name} x={x} y={315} label={name} />
      ))}
      {leftAxes.map(([name, y]) => (
        <Bubble key={name} x={79} y={y} label={name} />
      ))}
      {rightAxes.map(([name, y]) => (
        <Bubble key={name} x={353} y={y} label={name} />
      ))}

      <Dim x={216} y={21} label="10800" />
      <Dim x={216} y={299} label="10800" />
      <Dim x={92} y={162} label="13300" vertical />
      <Dim x={337} y={162} label="13300" vertical />
      {topDims.map(([label, x]) => (
        <Dim key={x} x={x} y={31} label={label} />
      ))}
      {bottomDims.map(([label, x]) => (
        <Dim key={x} x={x} y={289} label={label} />
      ))}
      {leftDims.map(([label, y]) => (
        <Dim key={y} x={102} y={y} label={label} vertical />
      ))}
      {rightDims.map(([label, y]) => (
        <Dim key={y} x={327} y={y} label={label} vertical />
      ))}

      {/* UCS icon */}
      <g stroke="#e6e8ea" fill="none">
        <path d="M12.500 284v33h33" />
        <path d="M10.500 314.500h5v5h-5z" />
        <path d="M12.500 272l4 4.500 4-4.500M16.500 276.500v5M50 311l8 7M58 311l-8 7" />
      </g>

      {/* crosshair */}
      <g stroke="#c9cbcd" fill="none">
        <path d="M361.500 0v330" strokeWidth="1.400" />
        <path d="M0 270.500h499" />
        <path d="M357.500 266.500h8v8h-8z" />
      </g>
    </svg>
  );
}

const sheetNav = [
  ["首页", "M6 1v6L3 4zM2 1v6"],
  ["上一页", "M5 1v6L2 4z"],
  ["下一页", "M3 1v6l3-3z"],
  ["末页", "M2 1v6l3-3zM6 1v6"],
];

function SheetTabs() {
  return (
    <div className="flex h-[13px] shrink-0 items-center bg-[#f0f0f0]">
      <div className="flex gap-1 pl-px">
        {sheetNav.map(([label, d]) => (
          <button key={label} type="button" aria-label={label} className="size-2">
            <svg viewBox="0 0 8 8" className="size-2">
              <path d={d} fill="#1c2026" stroke="#1c2026" strokeWidth="0.6" />
            </svg>
          </button>
        ))}
      </div>
      <div className="flex items-center leading-none">
        <button type="button" className="relative ml-0.5 h-[11px] px-2 font-bold text-white">
          <svg viewBox="0 0 34 11" preserveAspectRatio="none" className="absolute inset-0 size-full">
            <path d="M0 0h34l-5 11H7z" fill="#212830" />
          </svg>
          <span className="relative">模型</span>
        </button>
        {["布局1", "布局2", "+"].map((label) => (
          <Fragment key={label}>
            <button type="button" className="px-0.5">
              {label}
            </button>
            <svg viewBox="0 0 6 10" className="h-[10px] w-1.5">
              <path d="M0.500 10L5.500 0" stroke="#7c828a" />
            </svg>
          </Fragment>
        ))}
      </div>
      <div className="ml-auto flex h-[13px] w-[249px] items-center">
        <span className="h-[9px] w-[3px] border border-[#8a8f98]" />
        <span className="ml-[3px]">
          <Chevron d="M5 1L2 4l3 3" />
        </span>
        <span className="flex flex-1 justify-center">
          <span className="h-2 w-[11px] bg-[#c9c9c9]" />
        </span>
        <Chevron d="M3 1l3 3-3 3" />
        <span className="w-3" />
      </div>
    </div>
  );
}

function Workspace() {
  return (
    <section className="flex min-w-0 flex-1 flex-col bg-[#f0f0f0]">
      <div className="flex h-[13px] shrink-0 items-end border-b-2 border-[#6f7377]">
        <button type="button" className="relative flex h-3 w-16 items-center pt-0.5 pl-[15px]">
          <svg viewBox="0 0 64 12" className="absolute inset-0 size-full">
            <path d="M0 12L9 2q1-1.500 3-1.500h50q2 0 2 2V12z" fill="#fcc968" stroke="#d29a40" strokeWidth="0.700" />
          </svg>
          <span className="relative">演示户型</span>
          <svg viewBox="0 0 4 4" className="relative ml-2 size-1">
            <path d="M0 0l4 4M4 0L0 4" stroke="#c49a4a" strokeWidth="0.8" />
          </svg>
        </button>
      </div>
      <div className="flex min-h-0 flex-1">
        <div className="relative min-w-0 flex-1 overflow-hidden bg-[#212830]">
          <Drawing />
        </div>
        <div className="flex w-[11px] shrink-0 flex-col items-center py-0.5">
          <Chevron d="M1 5l3-3 3 3" />
          <span className="flex-[2]" />
          <span className="h-[11px] w-[10px] bg-[#c9c9c9]" />
          <span className="flex-1" />
          <Chevron />
        </div>
      </div>
      <SheetTabs />
    </section>
  );
}

// ------------------------------------------------------------
// | COMMAND LINE AND STATUS BAR
// ------------------------------------------------------------
function CommandPanel() {
  return (
    <section className="mt-0.5 flex h-[39px] shrink-0 border-t border-[#8a8f98] bg-white">
      <div className="ml-0.5 flex w-[10px] shrink-0 flex-col items-center gap-1 bg-[#c6d3e6] pt-0.5">
        <CloseRed />
        <Pin />
      </div>
      <div className="flex min-w-0 flex-1 flex-col border-l-2 border-[#7d8187] font-['Liberation_Mono','Noto_Sans_CJK_SC',monospace] text-[9px] leading-3">
        <div className="flex h-[25px] border-b border-[#b3b6ba]">
          <div className="flex-1 pl-px">
            <p className="text-[7px] leading-3">ICCURVETOWALL</p>
            <p>命令:指定对角点:</p>
          </div>
          <div className="flex w-3 flex-col items-center justify-between bg-[#f0f0f0] py-px">
            <Chevron d="M1 5l3-3 3 3" />
            <Chevron />
          </div>
        </div>
        <div className="flex h-[13px] items-center pl-px">
          <label htmlFor="command">命令:</label>
          <input id="command" className="h-3 min-w-0 flex-1 outline-none" />
          <div className="mr-3 flex h-3 w-12 items-center bg-[#f0f0f0]">
            <Chevron d="M5 1L2 4l3 3" />
            <span className="ml-1 h-[10px] w-[11px] bg-[#c9c9c9]" />
            <span className="flex-1" />
            <Chevron d="M3 1l3 3-3 3" />
          </div>
        </div>
      </div>
    </section>
  );
}

const statusModes = [
  "snap",
  "gridMode",
  "ortho*",
  "polar",
  "osnap*",
  "otrack*",
  "ucs",
  "dyn*",
  "weight",
  "pick",
  "layersBlue",
  "zoomPrev",
  "model*",
  "anno",
];
const statusScale = ["annoSun", "annoPlus", "checker*", "column2"];
const statusExtras = ["gear", "unlockBlue", "bulb", "inspect", "fullscreen"];

// a trailing * marks a mode that is switched on
function StatusIcons({ names }: { names: string[] }) {
  return (
    <>
      {names.map((entry) => {
        const active = entry.endsWith("*");
        const name = entry.replace("*", "");
        return (
          <button
            key={name}
            type="button"
            aria-label={name}
            aria-pressed={active}
            className={`flex h-3 w-[14px] shrink-0 items-center justify-center border ${
              active ? "border-[#f0c069] bg-[#fde9b8]" : "border-transparent"
            }`}
          >
            <Icon name={name} className="size-[10px]" />
          </button>
        );
      })}
    </>
  );
}

function StatusBar() {
  return (
    <footer className="flex h-4 shrink-0 items-center border-t border-[#d6d6d6] bg-[#f0f0f0] text-[7px]">
      <button type="button" className="ml-[3px] flex items-center gap-0.5 whitespace-nowrap">
        <span className="text-[8px]">比例</span> 1:100
        <Caret />
      </button>
      <p className="ml-[3px] whitespace-nowrap">
        <span className="text-[8px]">单位</span>:mm&nbsp; 95389, -103843, 0
      </p>
      <div className="ml-auto flex items-center">
        <StatusIcons names={statusModes} />
        <button type="button" className="flex w-4 items-center justify-between pr-px">
          1:1
          <Caret />
        </button>
        <StatusIcons names={statusScale} />
        <span className="w-[7px]" />
        <StatusIcons names={statusExtras} />
        <span className="ml-0.5 w-[38px]">GstarCAD</span>
        <svg viewBox="0 0 6 6" className="mt-1 mr-0.5 size-1.5" aria-hidden="true">
          <path d="M5 0h1v1H5zM3 2.500h1v1H3zM5 2.500h1v1H5zM0.500 5h1v1h-1zM3 5h1v1H3zM5 5h1v1H5z" fill="#8a8f98" />
        </svg>
      </div>
    </footer>
  );
}

export default function App() {
  return (
    <div className="flex h-screen flex-col overflow-hidden bg-[#f4f6fb] font-['Liberation_Sans','Noto_Sans_CJK_SC',sans-serif] text-[8px] leading-none text-[#3a3f45]">
      <Header />
      <main className="flex min-h-0 flex-1">
        <Toolbox />
        <div className="flex items-start gap-0.5 self-stretch bg-[#dfe8f5] px-0.5">
          <ToolColumn names={drawTools} />
          <ToolColumn names={wallTools} />
        </div>
        <Workspace />
        <div className="flex flex-col bg-[#dfe8f5] px-px">
          <ToolColumn names={modifyTools} />
          <ToolColumn names={orderTools} />
        </div>
      </main>
      <CommandPanel />
      <StatusBar />
    </div>
  );
}
